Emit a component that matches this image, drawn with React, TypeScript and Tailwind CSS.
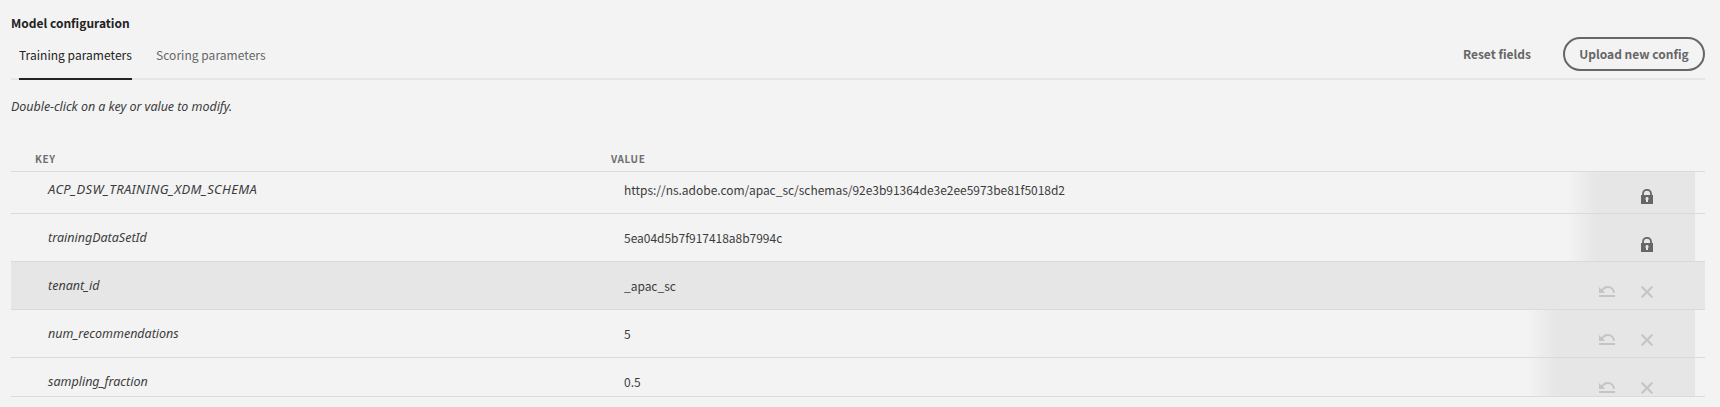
type Row = { name: string; value: string; locked?: boolean; active?: boolean; caps?: boolean };

const rows: Row[] = [
  { name: 'ACP_DSW_TRAINING_XDM_SCHEMA', value: 'https://ns.adobe.com/apac_sc/schemas/92e3b91364de3e2ee5973be81f5018d2', locked: true, caps: true },
  { name: 'trainingDataSetId', value: '5ea04d5b7f917418a8b7994c', locked: true },
  { name: 'tenant_id', value: '_apac_sc', active: true },
  { name: 'num_recommendations', value: '5' },
  { name: 'sampling_fraction', value: '0.5' },
];

function LockIcon() {
  return (
    <svg width="12" height="15" viewBox="0 0 12 15" fill="none">
      <path d="M2 7V4.8a4 4 0 0 1 8 0V7" stroke="#666" strokeWidth="1.8" />
      <path fillRule="evenodd" fill="#666" d="M0 6h12v9H0zM6 8a1.7 1.7 0 0 0-1 3v2h2v-2A1.7 1.7 0 0 0 6 8z" />
    </svg>
  );
}

function RevertIcon() {
  return (
    <svg width="16" height="12" viewBox="0 0 16 12" fill="none">
      <path d="M0 1v6h6.2L3.9 4.7z" fill="#c4c4c4" />
      <path d="M2.6 5C4.6 2 6.3 1 8.6 1c3.6 0 6.3 2.4 6.4 6" stroke="#c4c4c4" strokeWidth="2" />
      <path d="M0 9h16v2H0z" fill="#c4c4c4" />
    </svg>
  );
}

function CloseIcon() {
  return (
    <svg width="12" height="12" viewBox="0 0 12 12" fill="none">
      <path d="M.7.7l10.6 10.6M11.3.7L.7 11.3" stroke="#c4c4c4" strokeWidth="2.1" />
    </svg>
  );
}

export default function App() {
  return (
    <div className="h-[407px] overflow-hidden bg-[#f3f3f3] pt-3 pr-[15px] pl-[11px] font-['Noto_Sans_CJK_JP',sans-serif] text-[12px] leading-5 text-[#3c3c3c]">
      <h2 className="flex h-[22px] items-center font-bold text-[#222]">Model configuration</h2>
      <div className="flex h-[46px] justify-between border-b-2 border-[#e6e6e6]">
        <div className="flex gap-6 pl-2">
          <button className="-mb-0.5 flex w-[113px] border-b-2 border-[#222] pt-[11px] tracking-[0.03px] whitespace-nowrap text-[#222]">Training parameters</button>
          <button className="flex pt-[11px] tracking-[0.04px] text-[#666]">Scoring parameters</button>
        </div>
        <div className="flex items-start gap-8 pt-[3px] font-bold text-[#666]">
          <button className="flex h-[34px] items-center">Reset fields</button>
          <button className="flex h-[34px] w-[142px] items-center justify-center rounded-full border-2 border-[#666]">Upload new config</button>
        </div>
      </div>
      <p className="h-9 pt-[17px] font-['Noto_Sans',sans-serif] text-[12.5px] tracking-[-0.04px] italic">Double-click on a key or value to modify.</p>
      <div className="mt-[35px] grid h-[21px] grid-cols-[576px_1fr] border-b border-[#dadada] pl-6 text-[10px] leading-4 font-bold tracking-[0.6px] text-[#6e6e6e]">
        <span>KEY</span>
        <span>VALUE</span>
      </div>
      <div className="h-[225px] overflow-hidden border-b border-[#dadada]">
        <div className="-mt-1.5">
          {rows.map((row) => (
            <div
              key={row.name}
              className={`grid h-12 grid-cols-[576px_1fr_auto] border-b border-[#dadada] pr-2.5 pl-[37px] ${row.active ? 'bg-[#e6e6e6]' : ''}`}
            >
              <span className={`font-['Noto_Sans',sans-serif] italic ${row.caps ? 'pt-[13px] text-[13px] tracking-[0.33px]' : 'pt-3.5 text-[12.5px]'}`}>{row.name}</span>
              <span className="pt-3.5 tracking-[-0.025px]">{row.value}</span>
              {row.locked ? (
                <div className="flex w-[127px] justify-end bg-linear-to-r from-transparent to-[#e6e6e6] to-[28px] pt-[23px] pr-[42px]">
                  <LockIcon />
                </div>
              ) : (
                <div className="flex w-[167px] justify-end gap-[26px] bg-linear-to-r from-transparent to-[#e6e6e6] to-[28px] pt-6 pr-[42px]">
                  <RevertIcon />
                  <CloseIcon />
                </div>
              )}
            </div>
          ))}
        </div>
      </div>
    </div>
  );
}
